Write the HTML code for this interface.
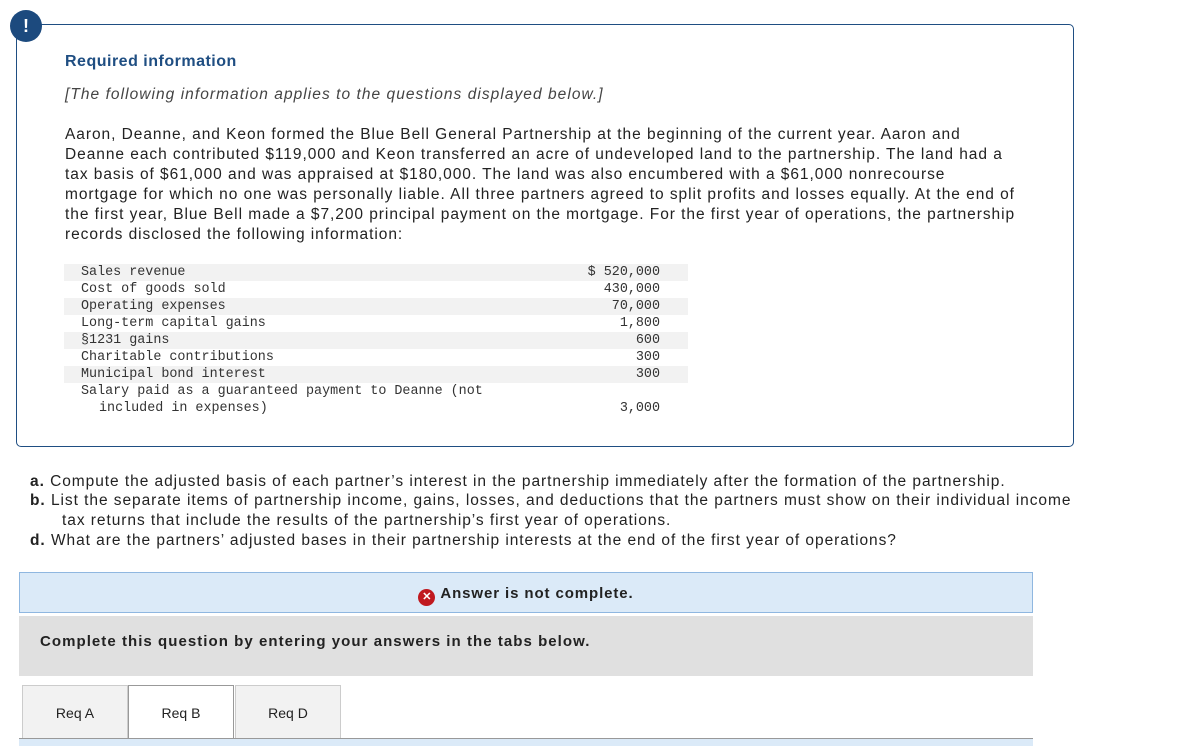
<!DOCTYPE html>
<html><head><style>
body{margin:0;width:1193px;height:745px;background:#fff;font-family:"Liberation Sans",sans-serif;color:#222;position:relative;overflow:hidden}
.box{position:absolute;left:16px;top:24px;width:1056px;height:421px;border:1px solid #1f4e82;border-radius:5px}
.badge{position:absolute;left:10px;top:10px;width:32px;height:32px;border-radius:50%;background:#1c4a7e;color:#fff;font-weight:bold;font-size:18px;text-align:center;line-height:32px}
.t{position:absolute;left:65px;font-size:15.5px;line-height:20px;letter-spacing:0.95px;white-space:nowrap}
h1{position:absolute;left:65px;top:53px;margin:0;font-size:16px;color:#1f4e82;font-weight:bold;letter-spacing:0.5px}
table{position:absolute;left:64px;top:264px;width:624px;border-collapse:collapse;font-family:"Liberation Mono",monospace;font-size:13.4px;color:#333}
td{padding:0 0 0 17px;height:17px;line-height:17px;white-space:nowrap}
td.r{text-align:right;padding-right:28px}
tr:nth-child(odd) td{background:#f2f2f2}
.q{position:absolute;left:30px;font-size:15.5px;line-height:20px;letter-spacing:0.95px;white-space:nowrap}
.ans{position:absolute;left:19px;top:572px;width:1012px;height:39px;background:#dbeaf8;border:1px solid #8fb7e0;text-align:center;font-size:15px;font-weight:bold;line-height:41px;letter-spacing:0.9px}
.x{display:inline-block;width:17px;height:17px;border-radius:50%;background:#c0191f;color:#fff;font-size:11px;line-height:17px;vertical-align:-2px;margin-right:5px;letter-spacing:0}
.cmp{position:absolute;left:19px;top:616px;width:1014px;height:60px;background:#e0e0e0;font-size:15px;font-weight:bold;line-height:52px;padding-left:21px;box-sizing:border-box;letter-spacing:1.05px}
.tab{position:absolute;top:685px;width:104px;height:53px;background:#f2f2f2;border:1px solid #ccc;border-bottom:none;text-align:center;line-height:55px;font-size:14px}
.line{position:absolute;left:19px;top:738px;width:1014px;height:7px;background:#dbeaf8;border-top:1px solid #999}
</style></head><body>
<div class="box"></div>
<div class="badge">!</div>
<h1>Required information</h1>
<div class="t" style="top:85px;font-style:italic;color:#444;letter-spacing:1.05px">[The following information applies to the questions displayed below.]</div>
<div class="t" style="top:125px">Aaron, Deanne, and Keon formed the Blue Bell General Partnership at the beginning of the current year. Aaron and<br>Deanne each contributed $119,000 and Keon transferred an acre of undeveloped land to the partnership. The land had a<br>tax basis of $61,000 and was appraised at $180,000. The land was also encumbered with a $61,000 nonrecourse<br>mortgage for which no one was personally liable. All three partners agreed to split profits and losses equally. At the end of<br>the first year, Blue Bell made a $7,200 principal payment on the mortgage. For the first year of operations, the partnership<br>records disclosed the following information:</div>
<table>
<tr><td>Sales revenue</td><td class="r">$ 520,000</td></tr>
<tr><td>Cost of goods sold</td><td class="r">430,000</td></tr>
<tr><td>Operating expenses</td><td class="r">70,000</td></tr>
<tr><td>Long-term capital gains</td><td class="r">1,800</td></tr>
<tr><td>§1231 gains</td><td class="r">600</td></tr>
<tr><td>Charitable contributions</td><td class="r">300</td></tr>
<tr><td>Municipal bond interest</td><td class="r">300</td></tr>
<tr><td style="background:#fff">Salary paid as a guaranteed payment to Deanne (not</td><td style="background:#fff"></td></tr>
<tr><td style="background:#fff;padding-left:35px">included in expenses)</td><td class="r" style="background:#fff">3,000</td></tr>
</table>
<div class="q" style="top:472px"><b>a.</b> Compute the adjusted basis of each partner’s interest in the partnership immediately after the formation of the partnership.</div>
<div class="q" style="top:491px"><b>b.</b> List the separate items of partnership income, gains, losses, and deductions that the partners must show on their individual income</div>
<div class="q" style="top:511px;left:62px">tax returns that include the results of the partnership’s first year of operations.</div>
<div class="q" style="top:531px"><b>d.</b> What are the partners’ adjusted bases in their partnership interests at the end of the first year of operations?</div>
<div class="ans"><span class="x">✕</span>Answer is not complete.</div>
<div class="cmp">Complete this question by entering your answers in the tabs below.</div>
<div class="tab" style="left:22px">Req A</div>
<div class="tab" style="left:128px;background:#fff;border-color:#999">Req B</div>
<div class="tab" style="left:235px">Req D</div>
<div class="line"></div>
</body></html>
